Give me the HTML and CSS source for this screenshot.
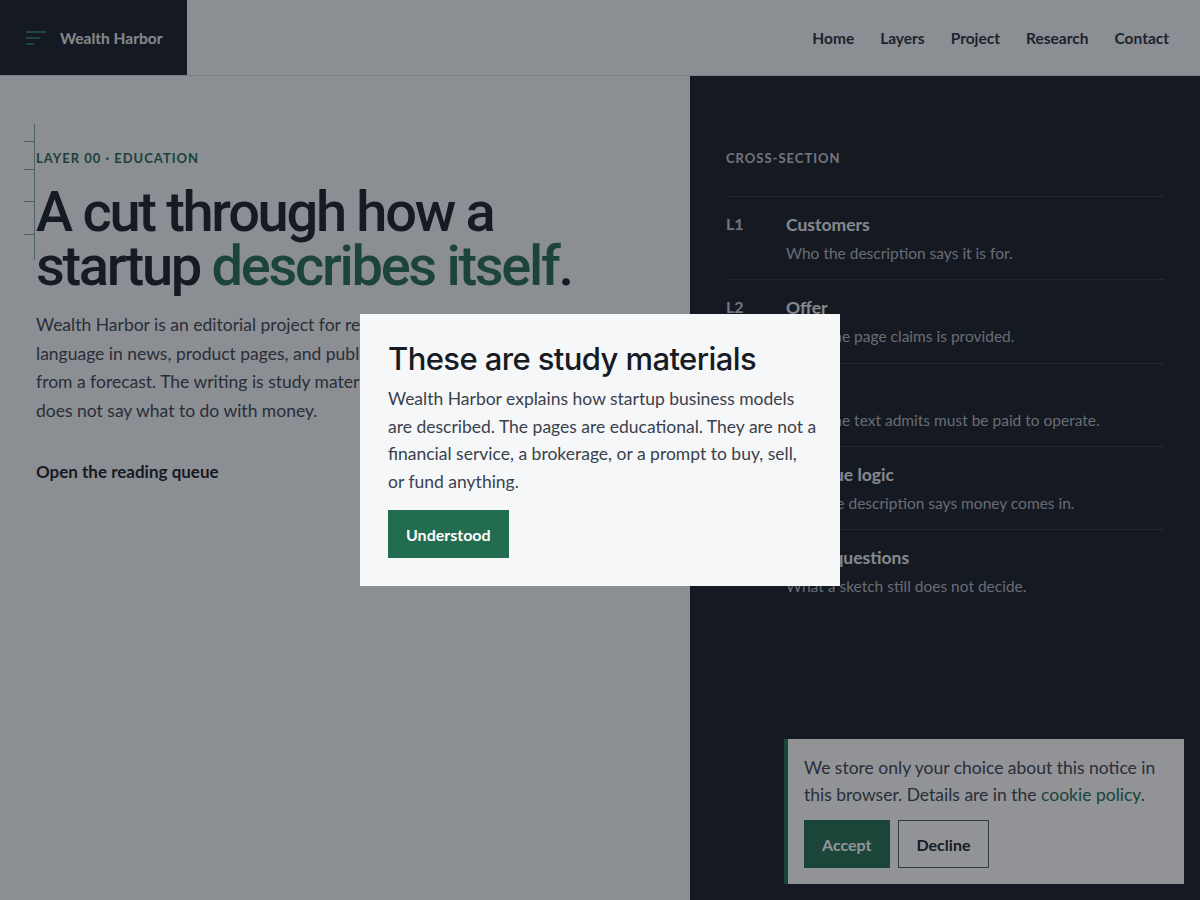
FILE: index.html
```html
<!DOCTYPE html>
<html lang="en">
<head>
<meta charset="UTF-8">
<meta name="viewport" content="width=device-width, initial-scale=1.0">
<title>Wealth Harbor</title>
<link rel="stylesheet" href="styles.css">
</head>
<body>
<header class="site-header">
  <a class="brand" href="#">
    <svg class="brand-icon" width="22" height="16" viewBox="0 0 22 16" aria-hidden="true">
      <path d="M1 2h20M1 8h14M1 14h8" stroke="currentColor" stroke-width="2" fill="none"/>
    </svg>
    <span>Wealth Harbor</span>
  </a>
  <nav class="nav">
    <a href="#">Home</a>
    <a href="#">Layers</a>
    <a href="#">Project</a>
    <a href="#">Research</a>
    <a href="#">Contact</a>
  </nav>
</header>

<main class="layout">
  <section class="intro">
    <!-- ruler marks on the left edge -->
    <div class="ruler">
      <span></span><span></span><span></span><span></span>
    </div>
    <p class="eyebrow">Layer 00 · Education</p>
    <h1>A cut through how a<br>startup <em>describes itself</em>.</h1>
    <p class="lead">Wealth Harbor is an editorial project for reading business-model language in news, product pages, and public filings, telling a claim from a forecast. The writing is study material for careful readers. It does not say what to do with money.</p>
    <a class="queue-link" href="#">Open the reading queue</a>
  </section>

  <aside class="section-panel">
    <p class="eyebrow">Cross-section</p>
    <ol class="layers">
      <li class="layer">
        <span class="layer-num">L1</span>
        <div>
          <h3>Customers</h3>
          <p>Who the description says it is for.</p>
        </div>
      </li>
      <li class="layer">
        <span class="layer-num">L2</span>
        <div>
          <h3>Offer</h3>
          <p>What the page claims is provided.</p>
        </div>
      </li>
      <li class="layer">
        <span class="layer-num">L3</span>
        <div>
          <h3>Costs</h3>
          <p>What the text admits must be paid to operate.</p>
        </div>
      </li>
      <li class="layer">
        <span class="layer-num">L4</span>
        <div>
          <h3>Revenue logic</h3>
          <p>How the description says money comes in.</p>
        </div>
      </li>
      <li class="layer">
        <span class="layer-num">L5</span>
        <div>
          <h3>Open questions</h3>
          <p>What a sketch still does not decide.</p>
        </div>
      </li>
    </ol>
  </aside>
</main>

<div class="cookie-banner">
  <p>We store only your choice about this notice in this browser. Details are in the <a href="#">cookie policy</a>.</p>
  <div class="cookie-actions">
    <button class="btn btn-primary">Accept</button>
    <button class="btn btn-outline">Decline</button>
  </div>
</div>

<div class="overlay"></div>

<div class="modal" role="dialog" aria-labelledby="modal-title">
  <h2 id="modal-title">These are study materials</h2>
  <p>Wealth Harbor explains how startup business models are described. The pages are educational. They are not a financial service, a brokerage, or a prompt to buy, sell,<br>or fund anything.</p>
  <button class="btn btn-primary">Understood</button>
</div>
</body>
</html>
```

FILE: styles.css
```css
body {
  margin: 0;
  font-family: "Lato", "Noto Sans", sans-serif;
  background-color: #f4f6f8;
  color: #171b22;
  min-height: 900px;
}
a {
  color: inherit;
  text-decoration: none;
}
.site-header {
  display: flex;
  justify-content: space-between;
  align-items: stretch;
  height: 75px;
  border-bottom: 1px solid #d5d9de;
}
.brand {
  display: flex;
  align-items: center;
  gap: 13px;
  width: 187px;
  box-sizing: border-box;
  padding-left: 25px;
  background-color: #161a21;
  color: #e6e9ed;
  font-size: 15.5px;
  font-weight: 700;
}
.brand-icon {
  color: #2a6e56;
}
.nav {
  display: flex;
  align-items: center;
  gap: 26px;
  padding-right: 31px;
  font-size: 15.5px;
  font-weight: 700;
  color: #252b35;
}
.layout {
  display: grid;
  grid-template-columns: 690px 1fr;
  min-height: 824px;
}
.intro {
  position: relative;
  padding: 74px 36px 0;
}
.ruler {
  position: absolute;
  left: 24px;
  top: 48px;
  width: 10px;
  height: 136px;
  border-right: 1px solid #7fa394;
}
.ruler span {
  display: block;
  height: 1px;
  background-color: #7fa394;
  margin-top: 17px;
}
.ruler span:nth-child(2) { margin-top: 27px; }
.ruler span:nth-child(3) { margin-top: 31px; }
.ruler span:nth-child(4) { margin-top: 32px; }
.eyebrow {
  margin: 0;
  font-size: 13px;
  font-weight: 700;
  letter-spacing: 1px;
  text-transform: uppercase;
  color: #23684e;
}
h1 {
  margin: 19px 0 18px;
  font-family: "Roboto", "Inter", sans-serif;
  font-size: 56px;
  line-height: 54px;
  font-weight: 500;
  letter-spacing: -2.3px;
  color: #171b22;
}
h1 em {
  font-style: normal;
  color: #236b4f;
}
.lead {
  max-width: 530px;
  margin: 0;
  font-size: 17.5px;
  line-height: 28.7px;
  color: #3b414c;
}
.queue-link {
  display: inline-block;
  margin-top: 35px;
  font-size: 17px;
  font-weight: 700;
  color: #171b22;
}
.section-panel {
  background-color: #161a21;
  padding: 74px 36px 0;
}
.section-panel .eyebrow {
  color: #c2c7ce;
}
.layers {
  list-style: none;
  margin: 30px 0 0;
  padding: 0;
  border-top: 1px solid #2f3540;
}
.layer {
  display: flex;
  gap: 44px;
  padding: 17px 0 17.3px;
  border-bottom: 1px solid #2f3540;
}
.layer:last-child {
  border-bottom: none;
}
.layer-num {
  width: 16px;
  font-size: 16px;
  font-weight: 700;
  color: #c2c7ce;
}
.layer h3 {
  margin: 0;
  font-size: 17.5px;
  font-weight: 700;
  color: #e8ebef;
}
.layer p {
  margin: 9px 0 0;
  font-size: 15.5px;
  color: #b1b6bd;
}
.btn {
  height: 48px;
  padding: 0 18px;
  font-family: inherit;
  font-size: 16px;
  font-weight: 700;
  border-radius: 0;
  cursor: pointer;
}
.btn-primary {
  background-color: #226c50;
  border: none;
  color: #ffffff;
}
.btn-outline {
  background-color: transparent;
  border: 1px solid #4f555e;
  color: #171b22;
}
.cookie-banner {
  position: fixed;
  right: 16px;
  bottom: 16px;
  width: 400px;
  box-sizing: border-box;
  padding: 15px 16px 16px;
  background-color: #ffffff;
  border-left: 4px solid #226c50;
}
.cookie-banner p {
  margin: 0 0 12px;
  font-size: 17.5px;
  line-height: 27px;
  color: #3b414c;
}
.cookie-banner a {
  color: #236b4f;
}
.cookie-actions {
  display: flex;
  gap: 8px;
}
.overlay {
  position: fixed;
  inset: 0;
  background-color: rgba(22, 26, 33, 0.47);
}
.modal {
  position: fixed;
  left: 360px;
  top: 314px;
  width: 480px;
  box-sizing: border-box;
  padding: 26px 22px 28px 28px;
  background-color: #f5f7f9;
}
.modal h2 {
  margin: 0 0 8px;
  font-family: "Inter", sans-serif;
  font-size: 31px;
  font-weight: 500;
  letter-spacing: -0.6px;
  color: #171b22;
}
.modal p {
  margin: 0 0 15px;
  font-size: 17.5px;
  line-height: 27.5px;
  color: #3b414c;
}
```
